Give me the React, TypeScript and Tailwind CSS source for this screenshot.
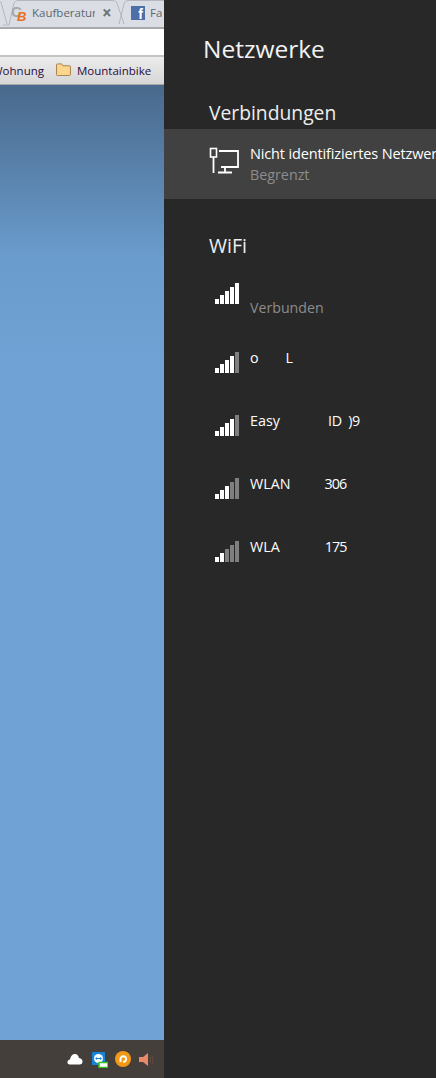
const font = { fontFamily: '"Open Sans", "Noto Sans", sans-serif' };

function Bars({ on }: { on: number }) {
  const hs = [5, 9, 13, 17, 21];
  return (
    <div className="flex w-[25px] h-[21px] items-end gap-px">
      {hs.map((h, i) => (
        <div key={i} className={i < on ? "w-1 bg-white" : "w-1 bg-[#7f7f7f]"} style={{ height: h }} />
      ))}
    </div>
  );
}

function Wifi({ on, children }: { on: number; children: React.ReactNode }) {
  return (
    <div className="h-[63px] pl-[51px] flex items-end relative">
      <div className="pb-[11px]"><Bars on={on} /></div>
      <div className="absolute left-[86px] top-[27px] text-[14.3px] leading-5 text-white whitespace-pre">{children}</div>
    </div>
  );
}

function LanIcon() {
  return (
    <svg className="shrink-0" width="30" height="27" viewBox="0 0 30 27" fill="none" stroke="#fff" strokeWidth="1.8">
      <rect x="1.5" y="1.5" width="6" height="8.5" strokeWidth="1.6" />
      <path d="M4.5 10V26" />
      <path d="M10 4H29V20H12" />
      <path d="M16 20V25M9 25.5H23" />
    </svg>
  );
}

function Browser() {
  return (
    <div className="w-[164px] shrink-0 h-full flex flex-col overflow-hidden text-[12px]" style={font}>
      <div className="h-[29px] shrink-0 bg-[#dadee4] border-b-2 border-[#a9a9a9] relative overflow-hidden">
        <svg className="absolute left-0 top-0" width="164" height="27" fill="none" stroke="#b4b8be">
          <path d="M0 2H1L7 24" />
          <path d="M3 25H9L14 3Q15 0.5 18 0.5H112Q116 0.5 117 3L124 24" />
          <path d="M119 24L124 4Q125 0.5 128 0.5H164" />
        </svg>
        <svg className="absolute left-[12px] top-[4px]" width="17" height="18" viewBox="0 0 17 18" style={{ fontFamily: '"Liberation Sans", sans-serif' }}>
          <text x="-1" y="13" fontSize="15" fontWeight="700" fill="#a8a8a8">C</text>
          <text x="5" y="17" fontSize="13" fontWeight="700" fontStyle="italic" fill="#e8701f">B</text>
        </svg>
        <span className="absolute left-[32px] top-[5px] w-[63px] overflow-hidden whitespace-nowrap text-[#5d6670] text-[11.5px] leading-4">Kaufberatur</span>
        <span className="absolute left-[102px] top-[3px] text-[#6c7278] font-bold text-[17px] leading-5">×</span>
        <div className="absolute left-[131px] top-[6px] w-[14px] h-[14px] bg-[#4e6ea8] text-white font-bold text-[14px] leading-[16px] text-right pr-[2px] overflow-hidden" style={{ fontFamily: '"Liberation Sans", sans-serif' }}>f</div>
        <span className="absolute left-[150px] top-[5px] text-[#5d6670] text-[11.5px] leading-4">Fa</span>
      </div>
      <div className="h-[26px] shrink-0 bg-white" />
      <div className="h-[30px] shrink-0 bg-gradient-to-b from-[#ececec] to-[#d6d6d6] border-t-2 border-[#c4c4c4] border-b border-b-[#a8a8a8] flex items-center whitespace-nowrap text-[#2a0a3a] relative overflow-hidden">
        <span className="absolute right-[120px] text-[11.5px]">Wohnung</span>
        <svg className="absolute left-[56px] top-[6px]" width="15" height="13" viewBox="0 0 16 14">
          <path d="M0.5 12.5V2Q0.5 1 1.5 1H6L7.5 3H14.5Q15.5 3 15.5 4V12.5Q15.5 13.5 14.5 13.5H1.5Q0.5 13.5 0.5 12.5Z" fill="#fbd78e" stroke="#a57a45" />
        </svg>
        <span className="absolute left-[77px] text-[11.5px]">Mountainbike</span>
      </div>
      <div className="flex-1 bg-[#70a2d5] bg-gradient-to-b from-[#49698c] via-[#6a9ccd] to-[#70a2d5] to-[30%] via-[18%]" />
      <div className="h-[38px] shrink-0 bg-[#443f3b] relative">
        <svg className="absolute left-[67px] top-[13px]" width="16" height="12" viewBox="0 0 16 12">
          <path d="M3 11.5Q0 11.5 0.5 8.5Q1 6.5 3 6.5Q4 1 8 1Q11 1 12 5Q15.5 5.5 15.5 8.5Q15.5 11.5 12.5 11.5Z" fill="#fff" />
        </svg>
        <svg className="absolute left-[92px] top-[12px]" width="16" height="16" viewBox="0 0 16 16">
          <rect x="0" y="0" width="13" height="13" rx="1" fill="#1684d8" />
          <circle cx="6.5" cy="6.5" r="4.5" fill="#fff" />
          <path d="M3 6.5L5 5V8ZM10 6.5L8 5V8ZM5 6H8V7H5Z" fill="#1684d8" />
          <rect x="7" y="10.5" width="9" height="5" fill="#fff" stroke="#35c21f" strokeWidth="1.5" />
        </svg>
        <svg className="absolute left-[115px] top-[11px]" width="16" height="16" viewBox="0 0 16 16">
          <circle cx="8" cy="8" r="8" fill="#f29a17" />
          <path d="M5.5 11V8A2.8 2.8 0 1 1 8 10.8" stroke="#fff" strokeWidth="2" fill="none" />
        </svg>
        <svg className="absolute left-[139px] top-[12px]" width="16" height="15" viewBox="0 0 16 15">
          <path d="M0 5H4L9 1V14L4 10H0Z" fill="#e8896a" />
          <path d="M11 5Q12.5 7.5 11 10M13 3Q15.5 7.5 13 12" stroke="#6b4a3c" fill="none" />
        </svg>
      </div>
    </div>
  );
}

export default function App() {
  return (
    <div className="w-[436px] h-[1078px] flex overflow-hidden bg-[#282828]">
      <Browser />
      <div className="flex-1 min-w-0 h-full bg-[#282828] overflow-hidden text-white" style={font}>
        <div className="pl-[39px] pt-[32px] h-[90px] text-[24.5px] leading-[34px] text-[#f2f2f2]">Netzwerke</div>
        <div className="pl-[45px] h-[39px] pt-[9px] text-[19.3px] leading-[28px] text-[#eeeeee]">Verbindungen</div>
        <div className="h-[70px] bg-[#414141] flex pl-[45px] pt-[18px] gap-[11px] whitespace-nowrap overflow-hidden">
          <LanIcon />
          <div className="-mt-[3px]">
            <div className="text-[14.5px] leading-[20px] tracking-[-0.14px]">Nicht identifiziertes Netzwerk</div>
            <div className="text-[14.3px] leading-[20px] mt-px text-[#8c8c8c]">Begrenzt</div>
          </div>
        </div>
        <div className="pl-[45px] h-[78px] pt-[33px] text-[19.5px] leading-[28px] text-[#eeeeee]">WiFi</div>
        <div className="h-[27px] pl-[51px] flex items-end relative">
          <Bars on={5} />
          <div className="absolute left-[86px] top-[21px] text-[14.2px] leading-5 text-[#8c8c8c]">Verbunden</div>
        </div>
        <div className="h-[17px]" />
        <Wifi on={4}><span>o</span><span className="ml-[27px]">L</span></Wifi>
        <Wifi on={4}><span>Easy</span><span className="ml-[48px]">ID</span><span className="ml-[6px] tracking-[-0.5px]">)9</span></Wifi>
        <Wifi on={3}><span>WLAN</span><span className="ml-[34px] tracking-[-0.9px]">306</span></Wifi>
        <Wifi on={2}><span>WLA</span><span className="ml-[45px] tracking-[-0.9px]">175</span></Wifi>
      </div>
    </div>
  );
}
